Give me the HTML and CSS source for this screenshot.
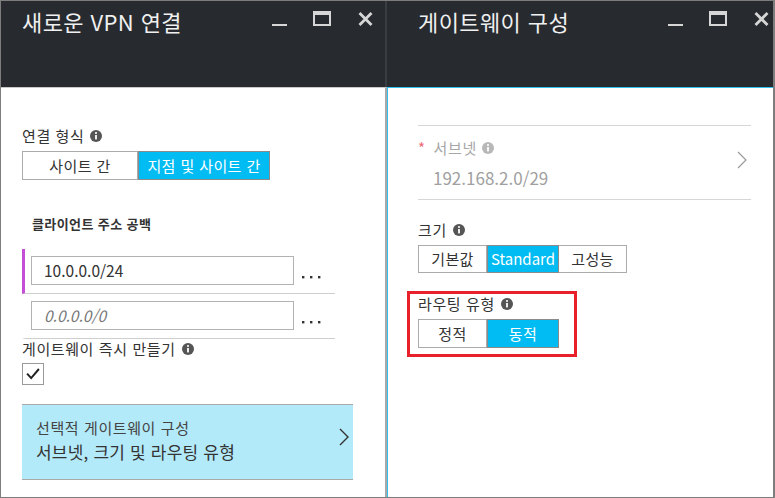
FILE: index.html
```html
<!DOCTYPE html>
<html lang="ko">
<head>
<meta charset="utf-8">
<title>VPN 연결</title>
<link rel="stylesheet" href="styles.css">
</head>
<body>
<div class="frame">
  <section class="blade blade--left">
    <header class="blade-head blade-head--left">
      <h1 class="blade-title">새로운 VPN 연결</h1>
      <div class="controls">
        <svg class="ctl ctl-min" viewBox="0 0 15 16"><rect x="0" y="13" width="15" height="2"/></svg>
        <svg class="ctl ctl-max" viewBox="0 0 18 16"><path d="M0 0H18V15H0Z M2 4H16V13H2Z" fill-rule="evenodd"/></svg>
        <svg class="ctl ctl-close" viewBox="0 0 15 16"><path d="M1.5 2L13.5 14M13.5 2L1.5 14" stroke-width="2.8" fill="none"/></svg>
      </div>
    </header>
    <div class="blade-body blade-body--left">
      <div class="label">연결 형식 <svg class="info" viewBox="0 0 12 12"><circle cx="6" cy="6" r="6"/><rect x="5.1" y="5" width="1.8" height="4.4" fill="#fff"/><circle cx="6" cy="3" r="1.05" fill="#fff"/></svg></div>
      <div class="seg seg--type">
        <div class="seg-btn">사이트 간</div>
        <div class="seg-btn seg-btn--on">지점 및 사이트 간</div>
      </div>
      <div class="sublabel">클라이언트 주소 공백</div>
      <div class="addr-row addr-row--active">
        <div class="addr-input">10.0.0.0/24</div>
        <svg class="dots" viewBox="0 0 20 3"><rect x="0" y="0" width="2.4" height="2.4"/><rect x="8" y="0" width="2.4" height="2.4"/><rect x="16" y="0" width="2.4" height="2.4"/></svg>
      </div>
      <div class="addr-row">
        <div class="addr-input addr-input--ph">0.0.0.0/0</div>
        <svg class="dots" viewBox="0 0 20 3"><rect x="0" y="0" width="2.4" height="2.4"/><rect x="8" y="0" width="2.4" height="2.4"/><rect x="16" y="0" width="2.4" height="2.4"/></svg>
      </div>
      <div class="label label--tight">게이트웨이 즉시 만들기 <svg class="info" viewBox="0 0 12 12"><circle cx="6" cy="6" r="6"/><rect x="5.1" y="5" width="1.8" height="4.4" fill="#fff"/><circle cx="6" cy="3" r="1.05" fill="#fff"/></svg></div>
      <div class="checkbox"><svg viewBox="0 0 22 22"><polyline points="4.5,10.5 9,15.5 17.5,5.5" fill="none" stroke="#222" stroke-width="2.2"/></svg></div>
      <div class="card">
        <div class="card-text">
          <div class="card-sub">선택적 게이트웨이 구성</div>
          <div class="card-main">서브넷, 크기 및 라우팅 유형</div>
        </div>
        <svg class="chev chev--dark" viewBox="0 0 10 18"><polyline points="1,1 9,9 1,17" fill="none" stroke-width="1.4"/></svg>
      </div>
    </div>
  </section>
  <section class="blade blade--right">
    <header class="blade-head blade-head--right">
      <h1 class="blade-title">게이트웨이 구성</h1>
      <div class="controls">
        <svg class="ctl ctl-min" viewBox="0 0 15 16"><rect x="0" y="13" width="15" height="2"/></svg>
        <svg class="ctl ctl-max" viewBox="0 0 18 16"><path d="M0 0H18V15H0Z M2 4H16V13H2Z" fill-rule="evenodd"/></svg>
        <svg class="ctl ctl-close" viewBox="0 0 15 16"><path d="M1.5 2L13.5 14M13.5 2L1.5 14" stroke-width="2.8" fill="none"/></svg>
      </div>
    </header>
    <div class="blade-body blade-body--right">
      <div class="subnet">
        <div class="subnet-text">
          <div class="subnet-label"><span class="req">*</span> 서브넷 <svg class="info info--muted" viewBox="0 0 12 12"><circle cx="6" cy="6" r="6"/><rect x="5.1" y="5" width="1.8" height="4.4" fill="#fff"/><circle cx="6" cy="3" r="1.05" fill="#fff"/></svg></div>
          <div class="subnet-value">192.168.2.0/29</div>
        </div>
        <svg class="chev chev--muted" viewBox="0 0 10 18"><polyline points="1,1 9,9 1,17" fill="none" stroke-width="1.2"/></svg>
      </div>
      <div class="label label--size">크기 <svg class="info" viewBox="0 0 12 12"><circle cx="6" cy="6" r="6"/><rect x="5.1" y="5" width="1.8" height="4.4" fill="#fff"/><circle cx="6" cy="3" r="1.05" fill="#fff"/></svg></div>
      <div class="seg seg--size">
        <div class="seg-btn">기본값</div>
        <div class="seg-btn seg-btn--on">Standard</div>
        <div class="seg-btn">고성능</div>
      </div>
      <div class="highlight">
        <div class="label label--inbox">라우팅 유형 <svg class="info" viewBox="0 0 12 12"><circle cx="6" cy="6" r="6"/><rect x="5.1" y="5" width="1.8" height="4.4" fill="#fff"/><circle cx="6" cy="3" r="1.05" fill="#fff"/></svg></div>
        <div class="seg seg--route">
          <div class="seg-btn">정적</div>
          <div class="seg-btn seg-btn--on">동적</div>
        </div>
      </div>
    </div>
  </section>
</div>
</body>
</html>
```
FILE: styles.css
```css
* { box-sizing: border-box; }
html, body { margin: 0; padding: 0; background: #fff; }
body {
  font-family: "Noto Sans CJK KR", "Noto Sans", sans-serif;
  color: #333;
}
.frame {
  width: 775px;
  height: 498px;
  border: 1px solid #7d7d7d;
  border-right-width: 2px;
  display: flex;
  overflow: hidden;
}
.blade {
  width: 386px;
  display: flex;
  flex-direction: column;
}
.blade-head {
  height: 86px;
  background: #272b2f;
  display: flex;
  align-items: flex-start;
  flex: none;
}
.blade-head--left { padding: 0 12px 0 21px; border-right: 2px solid #3a3e43; }
.blade-head--right { padding: 0 4px 0 31px; }
.blade-title {
  margin: 5px 0 0;
  font-size: 22px;
  line-height: 30px;
  font-weight: 400;
  color: #f0f0f0;
  letter-spacing: 0.4px;
}
.controls {
  margin-left: auto;
  margin-top: 10px;
  display: flex;
  gap: 26px;
}
.ctl { height: 16px; fill: #d6d6d6; stroke: #d6d6d6; }
.ctl-min { width: 15px; stroke: none; }
.ctl-max { width: 18px; stroke: none; }
.ctl-close { width: 15px; fill: none; }
.ctl-max + .ctl-close { margin-left: 1px; }

.blade-body { flex: 1; }
.blade-body--left {
  border-top: 1px solid #c9c9c9;
  border-right: 2px solid #a8a8a8;
  padding: 38px 0 0 21px;
}
.blade-body--right {
  border-top: 1px solid #2fc1ef;
  border-left: 1px solid #2fc1ef;
  padding: 37px 22px 0 30px;
}

.label {
  font-size: 15px;
  line-height: 20px;
  color: #333;
  letter-spacing: 0.6px;
  display: flex;
  align-items: center;
  gap: 6px;
}
.info { width: 12px; height: 12px; fill: #555; }
.info--muted { fill: #b8b8b8; }

.seg { display: flex; margin-top: 5px; }
.seg-btn {
  height: 29px;
  border: 1px solid #ababab;
  background: #fff;
  font-size: 15px;
  line-height: 27px;
  text-align: center;
  color: #333;
  letter-spacing: 0.4px;
}
.seg-btn + .seg-btn { border-left: none; }
.seg-btn--on {
  background: #00bcf2;
  color: #fff;
  border-color: #8a8a8a;
}
.seg-btn + .seg-btn--on { border-left: 1px solid #8a8a8a; }
.seg--type .seg-btn:nth-child(1) { width: 116px; }
.seg--type .seg-btn:nth-child(2) { width: 132px; }
.seg--size .seg-btn, .seg--route .seg-btn { height: 28px; line-height: 26px; }
.seg--size .seg-btn:nth-child(1) { width: 69px; }
.seg--size .seg-btn:nth-child(2) { width: 72px; letter-spacing: 0; }
.seg--size .seg-btn:nth-child(3) { width: 68px; }
.seg--route .seg-btn { height: 29px; line-height: 27px; }
.seg--route .seg-btn:nth-child(1) { width: 69px; }
.seg--route .seg-btn:nth-child(2) { width: 72px; }

.sublabel {
  margin: 35px 0 0 10px;
  font-size: 13px;
  line-height: 18px;
  font-weight: 700;
  color: #333;
  letter-spacing: 0.4px;
}
.addr-row {
  width: 313px;
  display: flex;
  align-items: flex-start;
  padding: 7px 0 8px 6px;
  border-left: 3px solid transparent;
  border-bottom: 1px solid #cfcfcf;
}
.blade-body--left .sublabel + .addr-row { margin-top: 16px; }
.addr-row--active { border-left-color: #c44fd6; }
.addr-input {
  width: 263px;
  height: 29px;
  border: 1px solid #b2b2b2;
  padding-left: 12px;
  font-size: 15.5px;
  line-height: 27px;
  color: #333;
}
.addr-input--ph { font-style: italic; color: #777; }
.dots { width: 20px; height: 3px; margin: 20px 0 0 8px; fill: #333; }

.label--tight { margin-top: 0; }
.checkbox {
  width: 22px;
  height: 22px;
  margin-top: 4px;
  border: 1px solid #9a9a9a;
}
.checkbox svg { display: block; width: 20px; height: 20px; }

.card {
  width: 331px;
  margin-top: 19px;
  background: #b3eaf9;
  border-top: 1px solid #a9a9a9;
  border-bottom: 1px solid #a9a9a9;
  padding: 13px 4px 15px 14px;
  display: flex;
  align-items: center;
}
.card-sub { font-size: 15px; line-height: 20px; color: #444; letter-spacing: 0.6px; }
.card-main { margin-top: 2px; font-size: 17px; line-height: 24px; color: #333; letter-spacing: 0.2px; }
.chev { width: 10px; height: 18px; margin-left: auto; }
.chev--dark { stroke: #333; margin-bottom: 8px; }
.chev--muted { stroke: #9a9a9a; margin-bottom: 8px; margin-right: 4px; }

.subnet {
  border-top: 1px solid #d6d6d6;
  border-bottom: 1px solid #d6d6d6;
  padding: 12px 0 9px;
  display: flex;
  align-items: center;
}
.subnet-label {
  font-size: 15px;
  line-height: 20px;
  color: #a6a6a6;
  letter-spacing: 0.6px;
  display: flex;
  align-items: center;
  gap: 5px;
}
.req { color: #ef6a78; margin-right: 3px; }
.subnet-value {
  margin: 8px 0 0 15px;
  font-size: 17px;
  line-height: 24px;
  color: #a0a0a0;
}
.label--size { margin-top: 20px; }
.highlight {
  width: 170px;
  margin: 18px 0 0 -11px;
  border: 3px solid #e8202a;
  padding: 0 8px 6px 8px;
}
.label--inbox { margin: 0; }
```
